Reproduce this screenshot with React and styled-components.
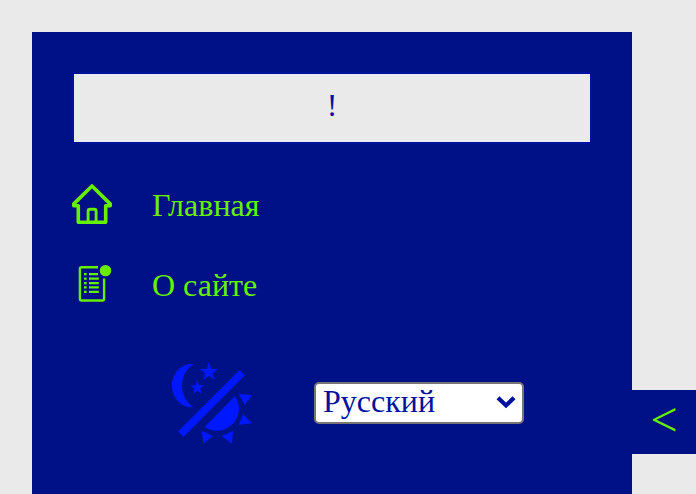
import React from "react";
import styled, { createGlobalStyle } from "styled-components";

const GlobalStyle = createGlobalStyle`
  *, *::before, *::after { box-sizing: border-box; }
  body {
    margin: 0;
    background: #eaeaea;
    font: 32px/36px "Liberation Serif", serif;
    overflow: hidden;
  }
`;

const Page = styled.div`
  display: flex;
  align-items: flex-start;
  height: 494px;
  padding: 32px 0 0 32px;
  overflow: hidden;
`;

const Sidebar = styled.aside`
  flex: none;
  width: 600px;
  height: 462px;
  padding: 40px 40px 0;
  background: #001087;
`;

const Notice = styled.div`
  height: 72px;
  padding-top: 13px;
  border: 2px solid #00109c;
  text-align: center;
  background: #eaeaea;
  color: #0010a0;
`;

const Nav = styled.nav`
  display: flex;
  flex-direction: column;
  gap: 40px;
  margin-top: 40px;
`;

const NavItem = styled.a`
  display: flex;
  align-items: center;
  gap: 40px;
  height: 40px;
  color: #66f000;
`;

const NavIcon = styled.svg`
  flex: none;
  width: 40px;
  height: 40px;
`;

const NavLabel = styled.span`
  padding-top: 2px;
`;

const Controls = styled.div`
  display: flex;
  align-items: flex-start;
  gap: 62px;
  margin: 58px 0 0 100px;
`;

const ThemeIcon = styled.svg`
  flex: none;
  width: 80px;
  height: 82px;
  fill: #0018ff;
`;

const LanguageSelect = styled.button`
  display: flex;
  align-items: center;
  justify-content: space-between;
  width: 210px;
  height: 42px;
  margin-top: 20px;
  padding: 0 6px 4px 7px;
  border: 2px solid #767676;
  border-radius: 5px;
  background: #fff;
  color: #0010a0;
  font: inherit;
`;

const Chevron = styled.svg`
  width: 20px;
  height: 14px;
  margin-top: 2px;
`;

const Toggle = styled.button`
  flex: none;
  width: 64px;
  height: 64px;
  margin-top: 358px;
  padding: 0 0 4px;
  border: 0;
  background: #001087;
  color: #66f000;
  font: 48px/60px "Liberation Serif", serif;
`;

export default function App() {
  return (
    <>
      <GlobalStyle />
      <Page>
        <Sidebar>
          <Notice>!</Notice>
          <Nav>
            <NavItem>
              <NavIcon viewBox="0 0 40 40" fill="none" stroke="currentColor">
                <path d="M6.3 21.7H1.8V19.9L20 2 38.2 19.9V21.7H33.7V38.2H6.3Z" strokeWidth="3.6" strokeLinejoin="round" />
                <path d="M16.1 38V27.2Q16.1 25.2 18 25.2H22.4Q24.1 25.2 24.1 27.2V38" strokeWidth="2.9" />
              </NavIcon>
              <NavLabel>Главная</NavLabel>
            </NavItem>
            <NavItem>
              <NavIcon viewBox="0 0 40 40" fill="none" stroke="currentColor" strokeWidth="2.4">
                <path d="M26 3.2H9.4Q7.9 3.2 7.9 4.7V34.8Q7.9 36.5 9.5 36.5H30.6Q32.1 36.5 32.1 35V14.6" />
                <circle cx="33.5" cy="6.6" r="5.7" fill="currentColor" stroke="none" />
                <path d="M12 10.1H14.7M12 14.7H14.7M12 19.1H14.7M12 23.4H14.7M12 27.9H14.7M17 10.1H26M17 14.7H26.8M17 19.1H26.8M17 23.4H26.8M17 27.9H26.8" strokeWidth="2.2" />
              </NavIcon>
              <NavLabel>О сайте</NavLabel>
            </NavItem>
          </Nav>
          <Controls>
            <ThemeIcon viewBox="0 0 80 82">
              <path d="M22 2C9 1 0 11.4 0 23.5C0 36 9.5 46.5 21.5 45C14 40.5 10 32.5 10 23.5C10 14.5 14.5 6 22 2Z" />
              <path d="M36.9 0L39.2 6.9 46 6.9 40.5 11.2 42.7 18 36.9 13.8 31.1 18 33.2 11.2 27.7 6.9 34.7 6.9Z" />
              <path d="M25.3 18.2L27 23.2 32.2 23.3 28.1 26.4 29.6 31.8 25.3 28.7 20.8 31.9 22.3 26.5 18.2 23.3 23.6 23.2Z" />
              <path d="M67.6 8L72.8 13.2 11.4 74.9 6 69.6Z" />
              <path d="M62.8 34.2C68 41.5 68.7 52 62.3 60C54.8 70 41.5 71 32.7 65Z" />
              <path d="M66.8 32L80 33 72.7 42.8ZM71.1 52.2L80 61.2 66.8 62.8ZM30 69L41 74 31.2 81.8ZM61 69L60 82 49.8 74Z" />
            </ThemeIcon>
            <LanguageSelect>
              <span>Русский</span>
              <Chevron viewBox="0 0 20 14" fill="none" stroke="currentColor" strokeWidth="4.2">
                <path d="M2 2.8L10 10.4 18 2.8" />
              </Chevron>
            </LanguageSelect>
          </Controls>
        </Sidebar>
        <Toggle>&lt;</Toggle>
      </Page>
    </>
  );
}
